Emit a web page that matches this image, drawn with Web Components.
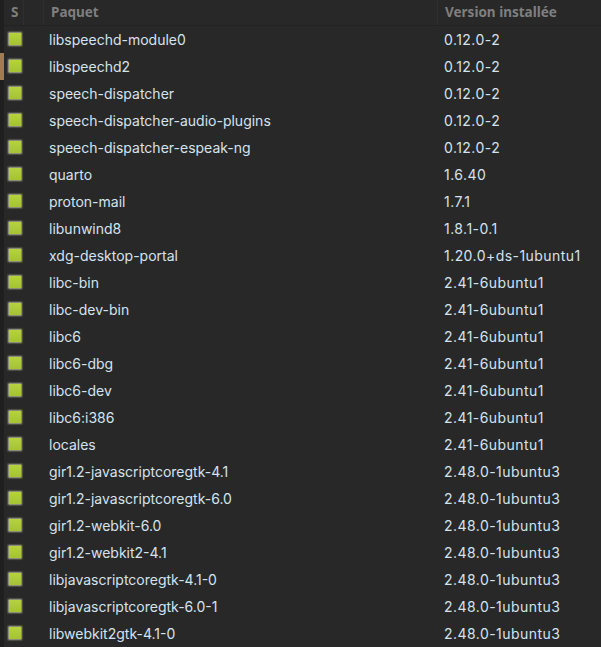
<!DOCTYPE html>
<html>
<head>
<meta charset="utf-8">
<style>
  html, body { margin: 0; height: 100%; background: #282828; overflow: hidden; }
</style>
</head>
<body>
<package-list></package-list>
<script>
const PACKAGES = [
  ["libspeechd-module0", "0.12.0-2"],
  ["libspeechd2", "0.12.0-2", true],
  ["speech-dispatcher", "0.12.0-2"],
  ["speech-dispatcher-audio-plugins", "0.12.0-2"],
  ["speech-dispatcher-espeak-ng", "0.12.0-2"],
  ["quarto", "1.6.40"],
  ["proton-mail", "1.7.1"],
  ["libunwind8", "1.8.1-0.1"],
  ["xdg-desktop-portal", "1.20.0+ds-1ubuntu1"],
  ["libc-bin", "2.41-6ubuntu1"],
  ["libc-dev-bin", "2.41-6ubuntu1"],
  ["libc6", "2.41-6ubuntu1"],
  ["libc6-dbg", "2.41-6ubuntu1"],
  ["libc6-dev", "2.41-6ubuntu1"],
  ["libc6:i386", "2.41-6ubuntu1"],
  ["locales", "2.41-6ubuntu1"],
  ["gir1.2-javascriptcoregtk-4.1", "2.48.0-1ubuntu3"],
  ["gir1.2-javascriptcoregtk-6.0", "2.48.0-1ubuntu3"],
  ["gir1.2-webkit-6.0", "2.48.0-1ubuntu3"],
  ["gir1.2-webkit2-4.1", "2.48.0-1ubuntu3"],
  ["libjavascriptcoregtk-4.1-0", "2.48.0-1ubuntu3"],
  ["libjavascriptcoregtk-6.0-1", "2.48.0-1ubuntu3"],
  ["libwebkit2gtk-4.1-0", "2.48.0-1ubuntu3"],
];

class StatusBox extends HTMLElement {
  connectedCallback() {
    this.attachShadow({ mode: "open" });
    this.shadowRoot.innerHTML = `
      <style>
        :host {
          display: block;
          box-sizing: border-box;
          width: 14px;
          height: 14px;
          background: linear-gradient(#b6d23e, #a4c234);
          border: 1px solid #8b8d78;
          box-shadow: 0 0 1px 1px #505048;
          border-radius: 1px;
        }
      </style>
    `;
  }
}

class PackageRow extends HTMLElement {
  connectedCallback() {
    this.attachShadow({ mode: "open" });
    this.shadowRoot.innerHTML = `
      <style>
        :host {
          display: grid;
          grid-template-columns: 44px 400px 1fr;
          height: 27px;
          align-items: center;
          position: relative;
          font: 14px Inter, sans-serif;
          color: #d5e3ee;
        }
        status-box { margin-left: 8px; margin-top: -1px; }
        .name { padding-left: 5px; white-space: nowrap; }
        .version { white-space: nowrap; letter-spacing: 0.45px; }
        .mark {
          position: absolute;
          left: 0;
          top: 0;
          width: 4px;
          height: 27px;
          background: #a27c50;
          display: none;
        }
        :host([marked]) .mark { display: block; }
      </style>
      <div class="mark"></div>
      <status-box></status-box>
      <div class="name"><slot name="name"></slot></div>
      <div class="version"><slot name="version"></slot></div>
    `;
  }
}

class PackageList extends HTMLElement {
  connectedCallback() {
    this.attachShadow({ mode: "open" });
    this.shadowRoot.innerHTML = `
      <style>
        :host {
          display: block;
          height: 647px;
          overflow: hidden;
          background: #282828;
        }
        header {
          display: grid;
          grid-template-columns: 24px 20px 394px 1fr;
          height: 25px;
          border-bottom: 1px solid #222;
          font: 700 13.5px "Noto Sans", sans-serif;
          color: #7f7f7f;
          align-items: center;
        }
        header div { height: 25px; line-height: 25px; border-right: 1px solid #2f2f2f; white-space: nowrap; }
        header div:last-child { border-right: 0; }
        .s { padding-left: 11px; box-sizing: border-box; }
        .p { padding-left: 7px; box-sizing: border-box; }
        .v { padding-left: 7px; }
        .gutter {
          position: absolute;
          left: 0;
          top: 0;
          bottom: 0;
          width: 4px;
          background: #1f1f1f;
        }
      </style>
      <div class="gutter"></div>
      <header>
        <div class="s">S</div><div></div><div class="p">Paquet</div><div class="v">Version installée</div>
      </header>
      <main></main>
    `;
    const main = this.shadowRoot.querySelector("main");
    for (const [name, version, marked] of PACKAGES) {
      const row = document.createElement("package-row");
      if (marked) row.setAttribute("marked", "");
      const n = document.createElement("span");
      n.slot = "name";
      n.textContent = name;
      const v = document.createElement("span");
      v.slot = "version";
      v.textContent = version;
      row.append(n, v);
      main.append(row);
    }
  }
}

customElements.define("status-box", StatusBox);
customElements.define("package-row", PackageRow);
customElements.define("package-list", PackageList);
</script>
</body>
</html>
